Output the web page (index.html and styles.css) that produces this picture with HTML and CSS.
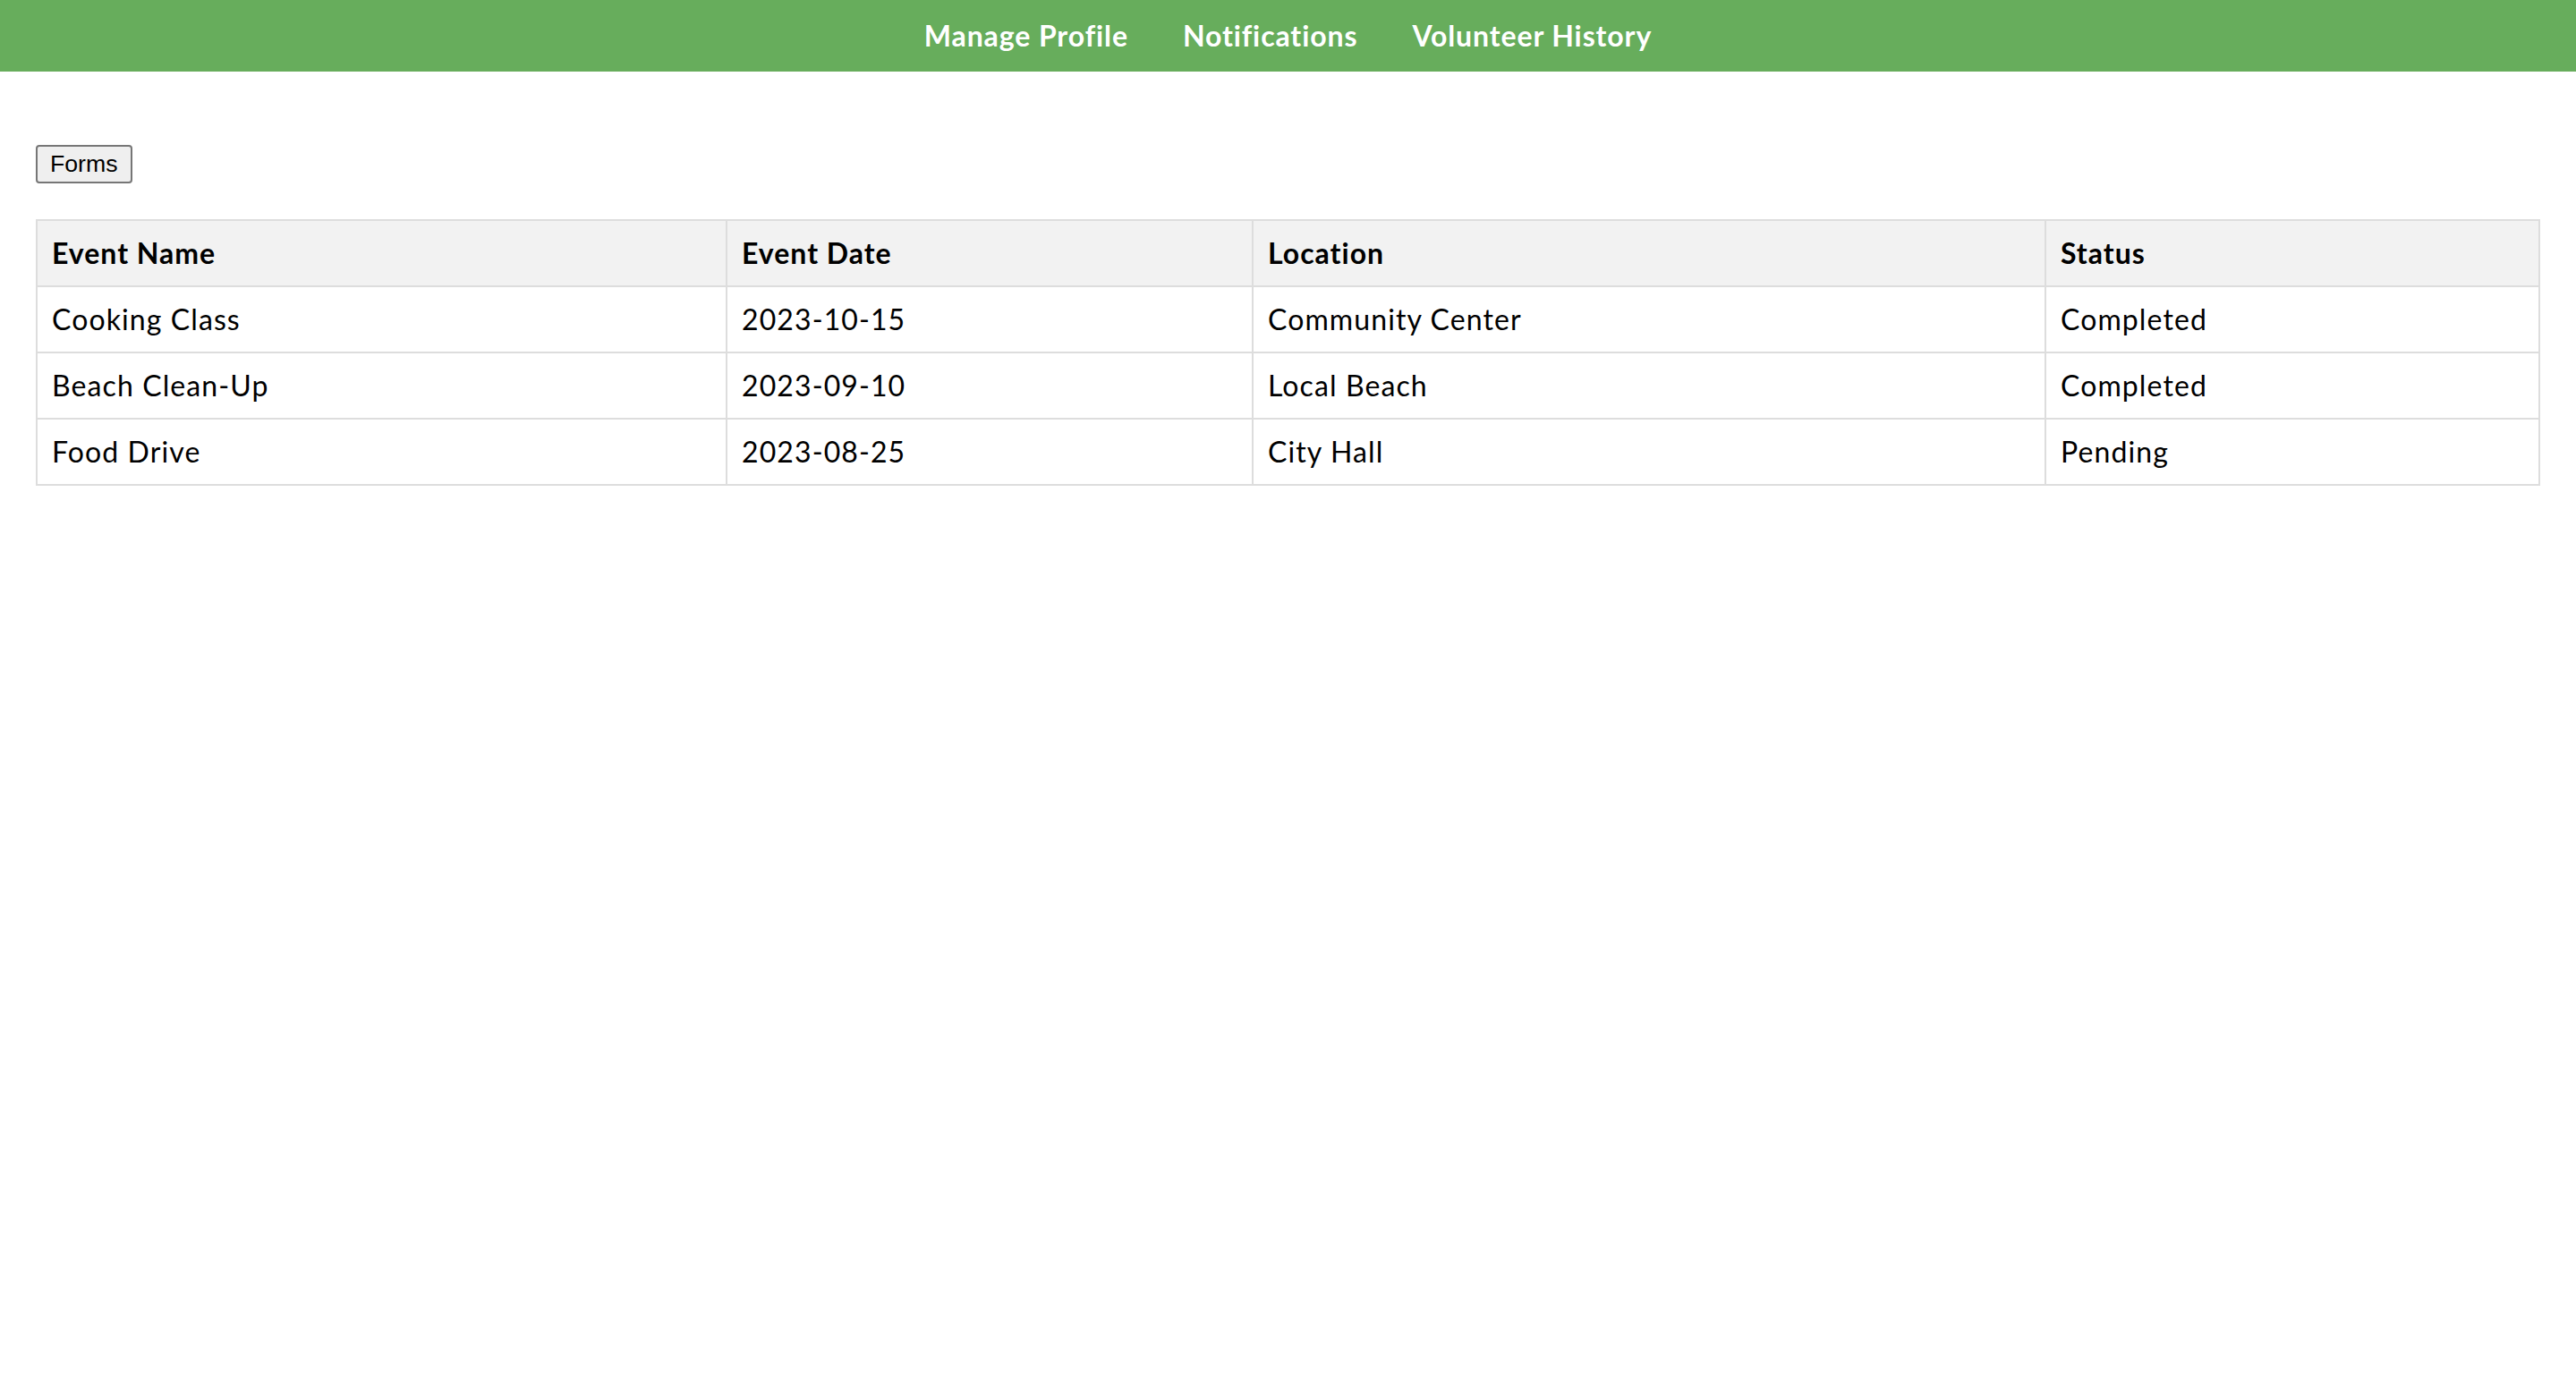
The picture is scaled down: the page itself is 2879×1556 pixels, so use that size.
FILE: index.html
```html
<!DOCTYPE html>
<html lang="en">
<head>
<meta charset="utf-8">
<title>Volunteer History</title>
<link rel="stylesheet" href="styles.css">
</head>
<body>
<nav class="topnav">
  <a class="navlink" href="#">Manage Profile</a>
  <a class="navlink" href="#">Notifications</a>
  <a class="navlink" href="#">Volunteer History</a>
</nav>
<main class="content">
  <div class="toolbar">
    <button class="forms-btn" type="button">Forms</button>
  </div>
  <table class="history">
    <colgroup>
      <col class="c-name">
      <col class="c-date">
      <col class="c-loc">
      <col class="c-status">
    </colgroup>
    <thead>
      <tr><th>Event Name</th><th>Event Date</th><th>Location</th><th>Status</th></tr>
    </thead>
    <tbody>
      <tr><td>Cooking Class</td><td>2023-10-15</td><td>Community Center</td><td>Completed</td></tr>
      <tr><td>Beach Clean-Up</td><td>2023-09-10</td><td>Local Beach</td><td>Completed</td></tr>
      <tr><td>Food Drive</td><td>2023-08-25</td><td>City Hall</td><td>Pending</td></tr>
    </tbody>
  </table>
</main>
</body>
</html>
```

FILE: styles.css
```css
html, body {
  margin: 0;
  padding: 0;
  background: #ffffff;
}
body {
  font-family: Lato, "Noto Sans", sans-serif;
  color: #000;
}
.topnav {
  height: 80px;
  background: #67ad5c;
  display: flex;
  justify-content: center;
  align-items: center;
  gap: 61px;
}
.navlink {
  color: #ffffff;
  text-decoration: none;
  font-weight: 700;
  font-size: 32px;
  letter-spacing: 0.9px;
  line-height: 1;
}
.content {
  padding: 82px 40px 40px;
}
.toolbar {
  display: flex;
}
.forms-btn {
  font-family: "Liberation Sans", Arial, sans-serif;
  font-size: 26.67px;
  color: #000;
  background: #efefef;
  border: 2px solid #767676;
  border-radius: 4px;
  padding: 4px 14px;
  line-height: normal;
}
.history {
  margin-top: 40px;
  width: 100%;
  border-collapse: collapse;
  table-layout: fixed;
}
.c-name { width: 771px; }
.c-date { width: 588px; }
.c-loc { width: 886px; }
.c-status { width: auto; }
.history th,
.history td {
  border: 2px solid #dddddd;
  padding: 16px 16px;
  text-align: left;
  font-size: 32px;
  line-height: 40px;
  letter-spacing: 1.1px;
}
.history th {
  background: #f2f2f2;
  font-weight: 700;
  letter-spacing: 1px;
}
.history td {
  font-weight: 400;
}
```
